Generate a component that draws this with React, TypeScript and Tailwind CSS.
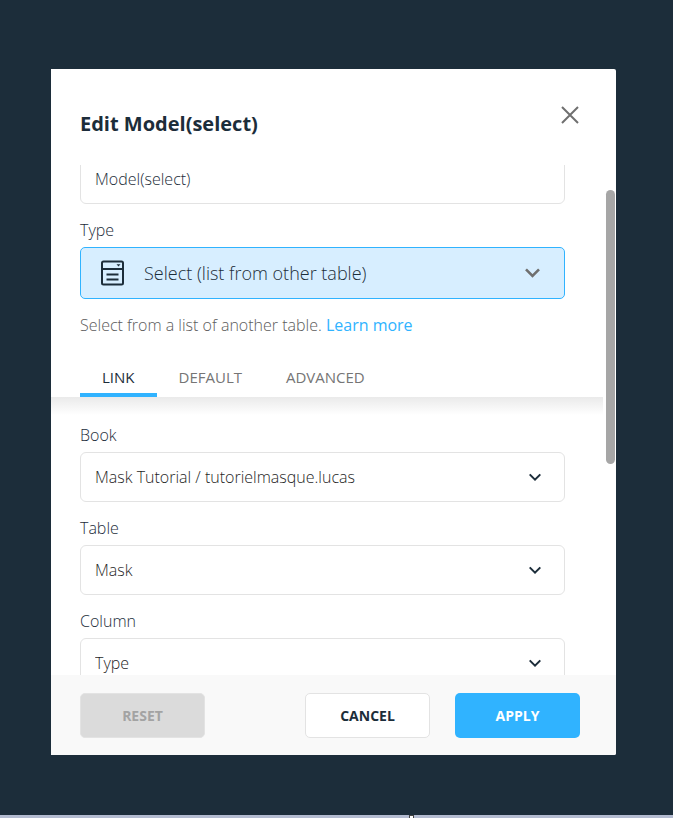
import { useId, useState } from 'react'
import type { ReactNode } from 'react'
import clsx from 'clsx'

const TABS = ['LINK', 'DEFAULT', 'ADVANCED']

function SelectListIcon() {
  return (
    <svg width="24" height="26" viewBox="0 0 24 26" fill="none" stroke="#1c2d3a" strokeWidth="2" aria-hidden>
      <rect x="2" y="1.5" width="21" height="23" rx="1.5" />
      <path d="M2 9h21M6.5 14.5h12M6.5 19.5h12" />
      <path d="M16.5 4.2h4l-2 2.4z" fill="#1c2d3a" stroke="none" />
    </svg>
  )
}

function Chevron({ large = false }: { large?: boolean }) {
  return large ? (
    <svg width="16" height="10" viewBox="0 0 16 10" fill="none" stroke="#6f6f6f" strokeWidth="2.6" aria-hidden>
      <path d="M1 1.3 7.5 7.9 14 1.3" />
    </svg>
  ) : (
    <svg width="12" height="8" viewBox="0 0 12 8" fill="none" stroke="#1c2d3a" strokeWidth="2" aria-hidden>
      <path d="M.7 1.4 6 6.6l5.3-5.2" />
    </svg>
  )
}

function Field({ label, children }: { label: string; children: (id: string) => ReactNode }) {
  const id = useId()
  return (
    <div className="flex flex-col gap-[5px]">
      <label htmlFor={id} className="text-base leading-6 font-light text-[#1c2d3a]">
        {label}
      </label>
      {children(id)}
    </div>
  )
}

function SelectField({ label, value }: { label: string; value: string }) {
  return (
    <Field label={label}>
      {(id) => (
        <div className="relative">
          <select
            id={id}
            className="h-[50px] w-full appearance-none rounded-md border border-[#e3e3e3] bg-white px-3.5 text-base font-light text-[#1f1f1f]"
          >
            <option>{value}</option>
          </select>
          <span className="pointer-events-none absolute inset-y-0 right-6 flex items-center">
            <Chevron />
          </span>
        </div>
      )}
    </Field>
  )
}

export default function App() {
  const [tab, setTab] = useState('LINK')
  const [name, setName] = useState('Model(select)')

  return (
    <div className="flex h-screen flex-col bg-[#1c2d3a] font-['Open_Sans','Noto_Sans',sans-serif]">
      <main className="flex min-h-0 flex-1 pt-[69px] pr-[57px] pb-[60px] pl-[51px]">
        <div role="dialog" aria-labelledby="dialog-title" className="flex min-w-0 flex-1 flex-col rounded-r-xs bg-white">
          <header className="flex h-24 shrink-0 items-start justify-between pt-9 pr-9 pl-[29px]">
            <h1 id="dialog-title" className="pt-1 text-xl leading-[30px] font-bold text-[#1c2d3a]">
              Edit Model(select)
            </h1>
            <button type="button" aria-label="Close" className="p-px">
              <svg width="18" height="18" viewBox="0 0 18 18" fill="none" stroke="#6f6f6f" strokeWidth="2" aria-hidden>
                <path d="m1 1 16 16M17 1 1 17" />
              </svg>
            </button>
          </header>

          <div className="flex min-h-0 flex-1">
            <div className="min-w-0 flex-1 overflow-hidden">
              <div className="-mt-3 flex flex-col gap-3.5 pr-[38px] pl-[29px]">
                <input
                  aria-label="Name"
                  value={name}
                  onChange={(e) => setName(e.target.value)}
                  className="h-[51px] w-full rounded-md border border-[#e3e3e3] px-3.5 text-base font-light text-[#1c2d3a]"
                />
                <Field label="Type">
                  {(id) => (
                    <div className="relative">
                      <select
                        id={id}
                        className="h-[52px] w-full appearance-none rounded-[5px] border border-[#30b3ff] bg-[#d7eeff] pr-12 pl-[63px] text-lg font-light text-[#1c2d3a]"
                      >
                        <option>Select (list from other table)</option>
                      </select>
                      <span className="pointer-events-none absolute inset-y-0 right-6 left-5 flex items-center justify-between">
                        <SelectListIcon />
                        <Chevron large />
                      </span>
                    </div>
                  )}
                </Field>
                <p className="text-base leading-6 font-light text-[#5c5c5c]">
                  Select from a list of another table.{' '}
                  <a href="#learn-more" className="font-normal text-[#30b3ff]">
                    Learn more
                  </a>
                </p>
              </div>

              <div role="tablist" className="mt-5 flex pl-[29px]">
                {TABS.map((t) => (
                  <button
                    key={t}
                    type="button"
                    role="tab"
                    aria-selected={tab === t}
                    onClick={() => setTab(t)}
                    className={clsx(
                      'h-10 border-b-4 px-[22px] pt-1 text-[15px]',
                      tab === t ? 'border-[#30b3ff] text-[#1c2d3a]' : 'border-transparent text-[#757575]'
                    )}
                  >
                    {t}
                  </button>
                ))}
              </div>
              <div className="h-[18px] bg-linear-to-b from-[#eaeaea] to-white" />

              <div className="flex flex-col gap-3.5 pt-2 pr-[38px] pl-[29px]">
                <SelectField label="Book" value="Mask Tutorial / tutorielmasque.lucas" />
                <SelectField label="Table" value="Mask" />
                <SelectField label="Column" value="Type" />
              </div>
            </div>
            <div className="w-[13px] shrink-0 pt-[25px] pl-[3px]">
              <div className="h-[274px] w-[9px] rounded-full bg-[#a6a6a6]" />
            </div>
          </div>

          <footer className="flex h-20 shrink-0 items-start gap-[25px] rounded-br-xs bg-[#f9f9f9] pt-[18px] pr-9 pl-[29px] text-sm font-bold">
            <button
              type="button"
              disabled
              className="mr-auto h-[45px] w-[125px] rounded-[5px] border border-[#e3e3e3] bg-[#dbdbdb] text-[#a3a3a3]"
            >
              RESET
            </button>
            <button type="button" className="h-[45px] w-[125px] rounded-[5px] border border-[#e3e3e3] bg-white text-[#1c2d3a]">
              CANCEL
            </button>
            <button type="button" className="h-[45px] w-[125px] rounded-[5px] bg-[#30b3ff] text-white">
              APPLY
            </button>
          </footer>
        </div>
      </main>
      <div className="flex h-[3px] shrink-0 justify-center bg-[#b3bbd0] pl-[150px]">
        <div className="w-[5px] border-x border-t border-[#444] bg-white" />
      </div>
    </div>
  )
}
